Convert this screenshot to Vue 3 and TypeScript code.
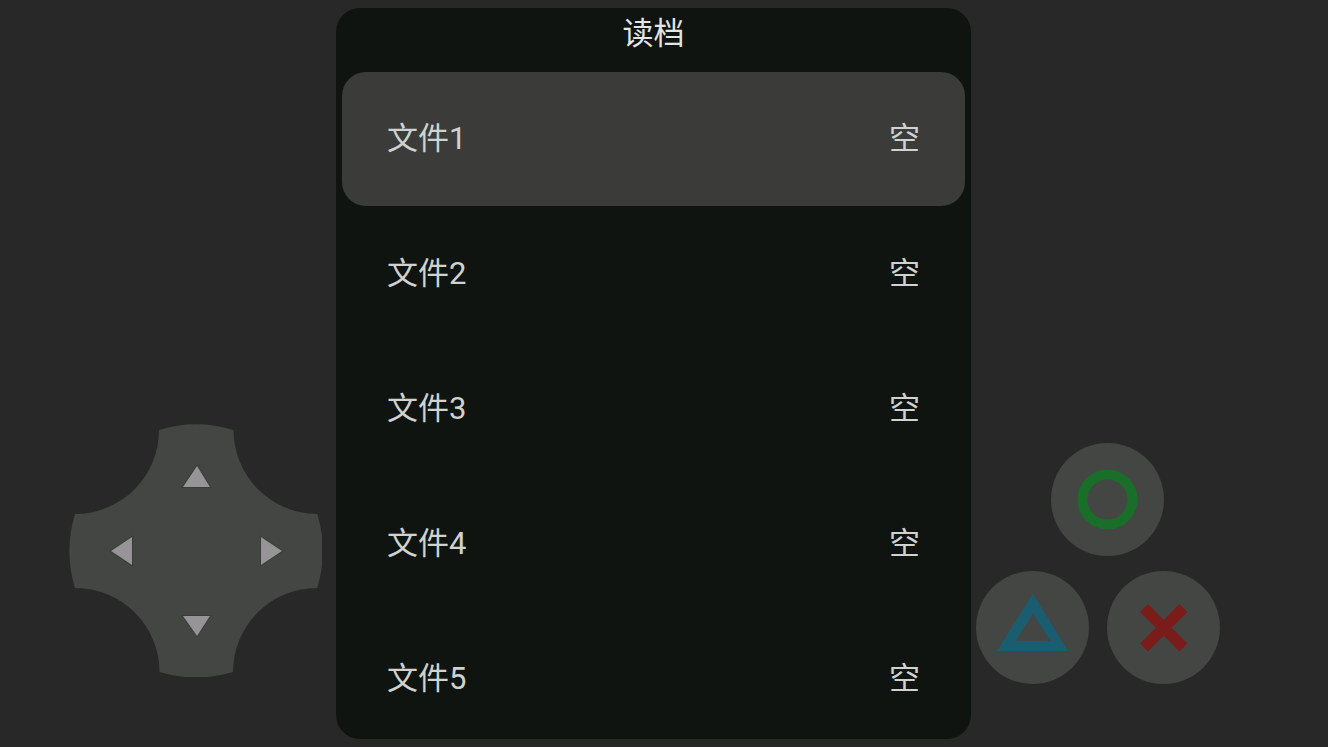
<script setup lang="ts">
import { ref } from 'vue'

interface SaveSlot {
  id: number
  name: string
  status: string
}

interface Arrow {
  id: string
  label: string
  points: string
}

const slots: SaveSlot[] = [1, 2, 3, 4, 5].map((id) => ({
  id,
  name: `文件${id}`,
  status: '空',
}))

const arrows: Arrow[] = [
  { id: 'up', label: '上', points: '44,42 30,63 57,63' },
  { id: 'left', label: '左', points: '42,43 63,29 63,57' },
  { id: 'right', label: '右', points: '44,43 23,29 23,57' },
  { id: 'down', label: '下', points: '30,23 57,23 44,43' },
]

const selected = ref(1)

function move(direction: string) {
  if (direction === 'up') selected.value = Math.max(1, selected.value - 1)
  if (direction === 'down') selected.value = Math.min(slots.length, selected.value + 1)
}
</script>

<template>
  <main class="screen">
    <nav class="dpad" aria-label="方向键">
      <svg class="dpad-shape" viewBox="0 0 253 253" aria-hidden="true">
        <path
          d="M90 6 A127 127 0 0 1 164.500 6 A84 84 0 0 0 248.300 90 A127 127 0 0 1 248.300 164 A84 84 0 0 0 164 248 A127 127 0 0 1 90.500 248 A84 84 0 0 0 6 164 A127 127 0 0 1 6 90 A84 84 0 0 0 90 6 Z"
        />
      </svg>
      <button
        v-for="arrow in arrows"
        :key="arrow.id"
        type="button"
        class="arrow"
        :class="arrow.id"
        :aria-label="arrow.label"
        @click="move(arrow.id)"
      >
        <svg viewBox="0 0 85 85" aria-hidden="true"><polygon :points="arrow.points" /></svg>
      </button>
    </nav>

    <section class="panel">
      <h1 class="title">读档</h1>
      <ul class="slots">
        <li v-for="slot in slots" :key="slot.id">
          <button
            type="button"
            class="slot"
            :class="{ selected: slot.id === selected }"
            @click="selected = slot.id"
          >
            <span>{{ slot.name }}</span>
            <span>{{ slot.status }}</span>
          </button>
        </li>
      </ul>
    </section>

    <div class="actions">
      <div class="actions-top">
        <button type="button" class="action" aria-label="圆圈">
          <svg viewBox="0 0 113 113" aria-hidden="true">
            <circle cx="56.500" cy="56.500" r="25" fill="none" stroke="#196e29" stroke-width="10" />
          </svg>
        </button>
      </div>
      <div class="actions-bottom">
        <button type="button" class="action" aria-label="三角">
          <svg viewBox="0 0 113 113" aria-hidden="true">
            <path
              fill="#1b5d70"
              fill-rule="evenodd"
              d="M57 22.500 L92 80 H21 Z M57 42.500 L39.500 70 H74.500 Z"
            />
          </svg>
        </button>
        <button type="button" class="action" aria-label="叉">
          <svg viewBox="0 0 113 113" aria-hidden="true">
            <path d="M37 37 L76.500 76.500 M76.500 37 L37 76.500" stroke="#7a1c1a" stroke-width="11" />
          </svg>
        </button>
      </div>
    </div>
  </main>
</template>

<style>
body {
  margin: 0;
  background: #282828;
}
</style>

<style scoped>
.screen {
  box-sizing: border-box;
  display: grid;
  grid-template-columns: 336fr 635fr 357fr;
  height: 100vh;
  padding: 8px 0;
  overflow: hidden;
  background: #282828;
  font-family: Roboto, 'Noto Sans CJK SC', sans-serif;
}

button {
  padding: 0;
  border: 0;
  background: none;
  font: inherit;
  color: inherit;
  cursor: pointer;
}

svg {
  display: block;
}

.dpad {
  position: relative;
  display: grid;
  grid-template: 84px 85px 84px / 84px 85px 84px;
  align-self: end;
  justify-self: end;
  margin: 0 14px 62px 0;
}

.dpad-shape {
  position: absolute;
  inset: 0;
  width: 100%;
  height: 100%;
  fill: #444643;
}

.arrow {
  position: relative;
}

.arrow svg {
  width: 85px;
  height: 85px;
  fill: #969496;
  stroke: #3a3b3a;
  stroke-width: 2px;
  paint-order: stroke;
}

.up {
  grid-area: 1 / 2;
}

.left {
  grid-area: 2 / 1;
}

.right {
  grid-area: 2 / 3;
}

.down {
  grid-area: 3 / 2;
}

.panel {
  display: flex;
  flex-direction: column;
  min-height: 0;
  padding: 0 6px;
  overflow: hidden;
  border-radius: 24px;
  background: #101410;
}

.title {
  flex: none;
  height: 64px;
  margin: 0;
  font-size: 31px;
  font-weight: 400;
  line-height: 52px;
  text-align: center;
  color: #e4e6e3;
}

.slots {
  display: flex;
  flex-direction: column;
  gap: 1px;
  margin: 0;
  padding: 0;
  list-style: none;
}

.slot {
  display: flex;
  align-items: center;
  justify-content: space-between;
  width: 100%;
  height: 134px;
  padding: 0 45px;
  border-radius: 24px;
  font-size: 31px;
  line-height: 48px;
  color: #d0d2cf;
}

.slot.selected {
  background: #3b3c39;
}

.actions {
  display: flex;
  flex-direction: column;
  align-self: end;
  gap: 15px;
  justify-self: start;
  margin: 0 0 55px 5px;
}

.actions-top {
  display: flex;
  justify-content: center;
  padding-left: 18px;
}

.actions-bottom {
  display: flex;
  gap: 18px;
}

.action {
  width: 113px;
  height: 113px;
  border-radius: 50%;
  background: #444643;
}
</style>
